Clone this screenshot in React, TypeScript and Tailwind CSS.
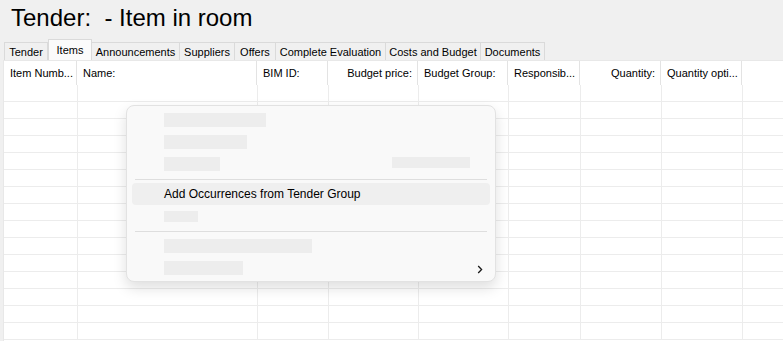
import React from 'react'

const tabs = [
  { label: 'Tender', w: 'w-[44px]' },
  { label: 'Items', w: 'w-[44px]', active: true },
  { label: 'Announcements', w: 'w-[88px]' },
  { label: 'Suppliers', w: 'w-[55px]' },
  { label: 'Offers', w: 'w-[41px]' },
  { label: 'Complete Evaluation', w: 'w-[110px]' },
  { label: 'Costs and Budget', w: 'w-[95px]' },
  { label: 'Documents', w: 'w-[64px]' },
]

const columns = [
  { label: 'Item Numb...', hw: 'w-[73px]', dw: 'w-[74px]' },
  { label: 'Name:', hw: 'w-[180px]', dw: 'w-[180px]' },
  { label: 'BIM ID:', hw: 'w-[71px]', dw: 'w-[71px]' },
  { label: 'Budget price:', hw: 'w-[90px]', dw: 'w-[90px]', right: true },
  { label: 'Budget Group:', hw: 'w-[90px]', dw: 'w-[90px]' },
  { label: 'Responsib...', hw: 'w-[72px]', dw: 'w-[72px]' },
  { label: 'Quantity:', hw: 'w-[81px]', dw: 'w-[81px]', right: true },
  { label: 'Quantity opti...', hw: 'w-[81px]', dw: 'w-[81px]' },
]

const rows = Array.from({ length: 15 })

function Bar({ w }: { w: string }) {
  return <div className={`h-[14px] bg-[#ededed] ${w}`} />
}

function MenuRow({ children, highlight }: { children: React.ReactNode; highlight?: boolean }) {
  return (
    <div
      className={`h-[22px] flex items-center pl-[32px] pr-[10px] rounded-[4px] ${highlight ? 'bg-[#efefef]' : ''}`}
    >
      {children}
    </div>
  )
}

function Separator() {
  return (
    <div className="h-[8px] flex items-center px-[3px]">
      <div className="h-px w-full bg-[#dedede]" />
    </div>
  )
}

export default function App() {
  return (
    <div className="relative w-[783px] h-[341px] overflow-hidden bg-[#f0f0f0] font-['Liberation_Sans',Arial,sans-serif] text-black">
      {/* Title */}
      <div className="pt-[6px] pl-[11px] h-[40px] text-[24px] leading-[24px] whitespace-pre">
        Tender:  - Item in room
      </div>

      {/* Tabs */}
      <div className="flex items-end h-[20px] pl-[4px]">
        {tabs.map((t) =>
          t.active ? (
            <div
              key={t.label}
              className={`${t.w} h-[21px] -mt-[1px] flex items-center justify-center bg-[#fbfbfb] border border-b-0 border-[#dadada] text-[11px] relative z-10`}
            >
              {t.label}
            </div>
          ) : (
            <div
              key={t.label}
              className={`${t.w} h-[18px] flex items-center justify-center bg-[#f0f0f0] border border-b-0 border-l-0 first:border-l border-[#dadada] text-[11px] pt-px`}
            >
              {t.label}
            </div>
          )
        )}
      </div>

      {/* Grid */}
      <div className="ml-[3px] h-[281px] bg-white border-l border-t border-[#e8e8e8] text-[11px]">
        <div className="flex h-[24px]">
          {columns.map((c) => (
            <div
              key={c.label}
              className={`${c.hw} shrink-0 h-full border-r border-[#e3e3e3] flex items-center ${c.right ? 'justify-end pr-[5px]' : 'pl-[6px]'}`}
            >
              {c.label}
            </div>
          ))}
        </div>
        {rows.map((_, i) => (
          <div key={i} className="flex h-[17px] border-b border-[#ececec]">
            {columns.map((c) => (
              <div key={c.label} className={`${c.dw} shrink-0 h-full border-r border-[#ececec]`} />
            ))}
          </div>
        ))}
      </div>

      {/* Context menu */}
      <div className="absolute left-[126px] top-[105px] w-[370px] h-[177px] rounded-[8px] border border-[#e2e2e2] bg-[#f9f9f9] shadow-[0_6px_14px_rgba(0,0,0,0.13)] px-[5px] pt-[3px] text-[12px]">
        <MenuRow>
          <Bar w="w-[102px]" />
        </MenuRow>
        <MenuRow>
          <Bar w="w-[83px]" />
        </MenuRow>
        <MenuRow>
          <div className="flex-1 flex items-center justify-between pr-[10px]">
            <Bar w="w-[56px]" />
            <div className="h-[11px] w-[78px] bg-[#ededed] -mt-[3px]" />
          </div>
        </MenuRow>
        <Separator />
        <MenuRow highlight>Add Occurrences from Tender Group</MenuRow>
        <MenuRow>
          <div className="h-[11px] w-[34px] bg-[#ededed]" />
        </MenuRow>
        <Separator />
        <MenuRow>
          <Bar w="w-[148px]" />
        </MenuRow>
        <MenuRow>
          <div className="flex-1 flex items-center justify-between">
            <Bar w="w-[79px]" />
            <svg width="6" height="9" viewBox="0 0 6 9" fill="none" className="-mr-[3px] mt-[2px]">
              <path d="M1.2 1 L4.6 4.5 L1.2 8" stroke="#1a1a1a" strokeWidth="1.3" />
            </svg>
          </div>
        </MenuRow>
      </div>
    </div>
  )
}
